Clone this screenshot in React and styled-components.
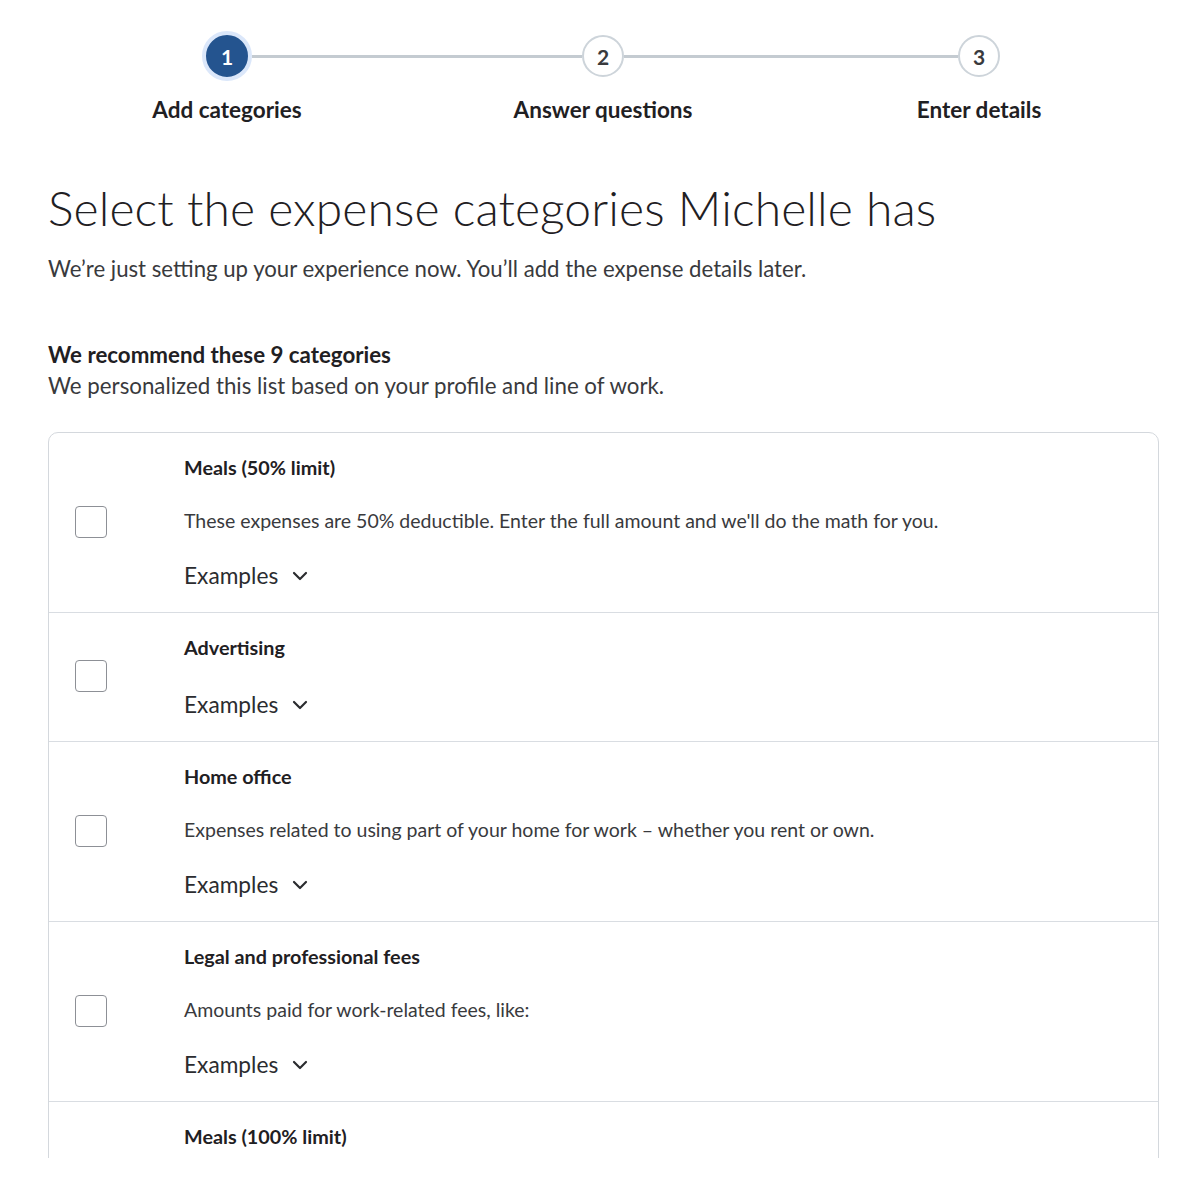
import React from 'react';
import styled, { createGlobalStyle } from 'styled-components';

const Global = createGlobalStyle`
  body {
    margin: 0;
    background: #fff;
    font-family: "Lato", "Open Sans", sans-serif;
    color: #393a3d;
  }
`;

const Page = styled.div`
  height: 1158px;
  overflow: hidden;
  padding: 31px 44px 0 48px;
  box-sizing: border-box;
`;

const Stepper = styled.div`
  display: flex;
  margin-left: -9px;
`;

const Step = styled.div`
  width: 376px;
  flex-shrink: 0;
  display: flex;
  flex-direction: column;
  align-items: center;
`;

const StepTop = styled.div`
  width: 100%;
  height: 50px;
  display: flex;
  align-items: center;
`;

const Connector = styled.div`
  flex: 1;
  height: 3px;
  background: ${p => (p.$off ? 'transparent' : '#c4cbd1')};
`;

const Circle = styled.div`
  width: ${p => (p.$active ? '42px' : '38px')};
  height: ${p => (p.$active ? '42px' : '38px')};
  border-radius: 50%;
  display: flex;
  align-items: center;
  justify-content: center;
  font-size: 21px;
  font-weight: 700;
  box-sizing: content-box;
  flex-shrink: 0;
  background: ${p => (p.$active ? '#24548f' : '#fff')};
  color: ${p => (p.$active ? '#fff' : '#393a3d')};
  border: ${p => (p.$active ? '4px solid #dbe7fa' : '2px solid #cdd4da')};
`;

const StepLabel = styled.div`
  margin-top: 15px;
  font-size: 22.5px;
  font-weight: 700;
  color: #1f2023;
  line-height: 28px;
`;

const Title = styled.h1`
  margin: 54px 0 0;
  font-size: 48px;
  font-weight: 300;
  color: #1f2023;
  line-height: 60px;
  letter-spacing: 0.1px;
`;

const Lead = styled.p`
  margin: 17px 0 0;
  font-size: 22.2px;
  line-height: 28px;
  color: #393a3d;
`;

const SectionHead = styled.h2`
  margin: 58px 0 0;
  font-size: 22.3px;
  font-weight: 700;
  line-height: 28px;
  color: #1f2023;
`;

const SectionSub = styled.p`
  margin: 3px 0 0;
  font-size: 22.3px;
  line-height: 28px;
`;

const Card = styled.div`
  margin-top: 32px;
  border: 1px solid #d4d8dd;
  border-radius: 10px;
`;

const Row = styled.div`
  display: flex;
  align-items: center;
  padding: 20px 0 22px;
  border-top: ${p => (p.$first ? 'none' : '1px solid #d9dde2')};
`;

const CheckCell = styled.div`
  width: 135px;
  padding-left: 26px;
  box-sizing: border-box;
  flex-shrink: 0;
`;

const Checkbox = styled.div`
  width: 30px;
  height: 30px;
  border: 1px solid #8d9096;
  border-radius: 4px;
`;

const Body = styled.div`
  display: flex;
  flex-direction: column;
`;

const ItemTitle = styled.div`
  font-size: 19.8px;
  font-weight: 700;
  line-height: 28px;
  color: #1f2023;
`;

const ItemDesc = styled.div`
  margin-top: 26px;
  font-size: 19.5px;
  line-height: 28px;
  color: #393a3d;
`;

const Examples = styled.div`
  display: flex;
  align-items: center;
  gap: 14px;
  margin-top: 27px;
  font-size: 22.7px;
  line-height: 28px;
  color: #2b2c2f;

  ${ItemTitle} + & {
    margin-top: 30px;
  }
`;

const Chevron = () => (
  <svg width="16" height="10" viewBox="0 0 16 10" fill="none">
    <path d="M2 2 L8 8 L14 2" stroke="#2b2c2f" strokeWidth="2.2" strokeLinecap="round" strokeLinejoin="round" />
  </svg>
);

const steps = ['Add categories', 'Answer questions', 'Enter details'];

const items = [
  { title: 'Meals (50% limit)', desc: "These expenses are 50% deductible. Enter the full amount and we'll do the math for you." },
  { title: 'Advertising' },
  { title: 'Home office', desc: 'Expenses related to using part of your home for work – whether you rent or own.' },
  { title: 'Legal and professional fees', desc: 'Amounts paid for work-related fees, like:' },
  { title: 'Meals (100% limit)', desc: 'These expenses are 100% deductible.' },
];

export default function App() {
  return (
    <Page>
      <Global />
      <Stepper>
        {steps.map((s, i) => (
          <Step key={s}>
            <StepTop>
              <Connector $off={i === 0} />
              <Circle $active={i === 0}>{i + 1}</Circle>
              <Connector $off={i === steps.length - 1} />
            </StepTop>
            <StepLabel>{s}</StepLabel>
          </Step>
        ))}
      </Stepper>
      <Title>Select the expense categories Michelle has</Title>
      <Lead>We’re just setting up your experience now. You’ll add the expense details later.</Lead>
      <SectionHead>We recommend these 9 categories</SectionHead>
      <SectionSub>We personalized this list based on your profile and line of work.</SectionSub>
      <Card>
        {items.map((it, i) => (
          <Row key={it.title} $first={i === 0}>
            <CheckCell>
              <Checkbox />
            </CheckCell>
            <Body>
              <ItemTitle>{it.title}</ItemTitle>
              {it.desc && <ItemDesc>{it.desc}</ItemDesc>}
              <Examples>
                Examples <Chevron />
              </Examples>
            </Body>
          </Row>
        ))}
      </Card>
    </Page>
  );
}
